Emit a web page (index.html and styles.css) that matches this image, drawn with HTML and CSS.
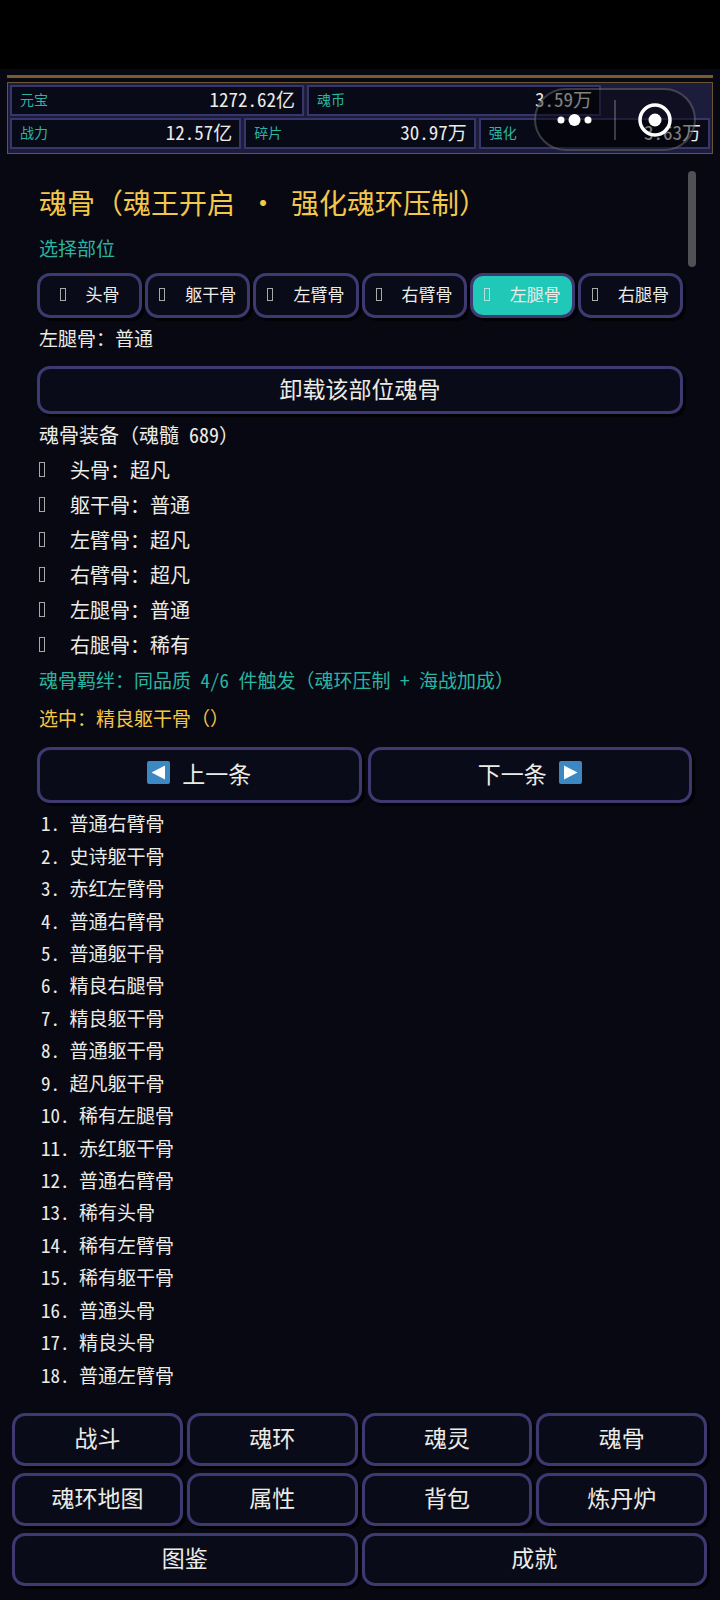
FILE: index.html
```html
<!DOCTYPE html>
<html lang="zh-CN">
<head>
  <meta charset="UTF-8" />
  <meta name="viewport" content="width=device-width, initial-scale=1.0" />
  <title>魂骨</title>
  <link rel="stylesheet" href="styles.css">
</head>
<body>
  <div class="status-bar"></div>

  <header class="hud">
    <div class="hud-box">
      <div class="hud-row hud-row-top">
        <div class="stat"><span class="stat-label">元宝</span><span class="stat-value">1272.62亿</span></div>
        <div class="stat"><span class="stat-label">魂币</span><span class="stat-value">3.59万</span></div>
      </div>
      <div class="hud-row">
        <div class="stat"><span class="stat-label">战力</span><span class="stat-value">12.57亿</span></div>
        <div class="stat"><span class="stat-label">碎片</span><span class="stat-value">30.97万</span></div>
        <div class="stat"><span class="stat-label">强化</span><span class="stat-value">3.63万</span></div>
      </div>
    </div>

    <!-- Mini program capsule -->
    <div class="capsule">
      <button class="capsule-btn" aria-label="更多">
        <svg width="36" height="16" viewBox="0 0 36 16" fill="#fff">
          <circle cx="4" cy="8" r="3.5" />
          <circle cx="17.5" cy="8" r="6" />
          <circle cx="31" cy="8" r="3.5" />
        </svg>
      </button>
      <button class="capsule-btn" aria-label="关闭">
        <svg width="34" height="34" viewBox="0 0 34 34">
          <circle cx="17" cy="17" r="15" fill="none" stroke="#fff" stroke-width="3.500" />
          <circle cx="17" cy="17" r="6.5" fill="#fff" />
        </svg>
      </button>
    </div>
  </header>

  <main class="panel">
    <div class="scrollbar"></div>

    <h1>魂骨（魂王开启<span class="dot">·</span>强化魂环压制）</h1>
    <p class="label">选择部位</p>

    <div class="tabs">
      <button class="btn tab"><i class="glyph"></i>头骨</button>
      <button class="btn tab"><i class="glyph"></i>躯干骨</button>
      <button class="btn tab"><i class="glyph"></i>左臂骨</button>
      <button class="btn tab"><i class="glyph"></i>右臂骨</button>
      <button class="btn tab active"><i class="glyph"></i>左腿骨</button>
      <button class="btn tab"><i class="glyph"></i>右腿骨</button>
    </div>

    <p class="current">左腿骨：普通</p>
    <button class="btn unequip">卸载该部位魂骨</button>

    <h2>魂骨装备（魂髓<span class="half"> 689</span>）</h2>
    <ul class="equipped">
      <li><i class="glyph"></i>头骨：超凡</li>
      <li><i class="glyph"></i>躯干骨：普通</li>
      <li><i class="glyph"></i>左臂骨：超凡</li>
      <li><i class="glyph"></i>右臂骨：超凡</li>
      <li><i class="glyph"></i>左腿骨：普通</li>
      <li><i class="glyph"></i>右腿骨：稀有</li>
    </ul>

    <p class="bond">魂骨羁绊：同品质<span class="half"> 4/6 </span>件触发（魂环压制<span class="half"> + </span>海战加成）</p>
    <p class="selected">选中：精良躯干骨（）</p>

    <div class="pager">
      <button class="btn">
        <svg class="arrow" viewBox="0 0 23 23"><rect width="23" height="23" rx="2" fill="#3b88c3" /><path d="M4.500 11.500 18 4.500v14z" fill="#fff" /></svg>
        上一条
      </button>
      <button class="btn">
        下一条
        <svg class="arrow" viewBox="0 0 23 23"><rect width="23" height="23" rx="2" fill="#3b88c3" /><path d="M18.500 11.500 5 4.500v14z" fill="#fff" /></svg>
      </button>
    </div>

    <ul class="bones">
      <li>1. 普通右臂骨</li>
      <li>2. 史诗躯干骨</li>
      <li>3. 赤红左臂骨</li>
      <li>4. 普通右臂骨</li>
      <li>5. 普通躯干骨</li>
      <li>6. 精良右腿骨</li>
      <li>7. 精良躯干骨</li>
      <li>8. 普通躯干骨</li>
      <li>9. 超凡躯干骨</li>
      <li>10. 稀有左腿骨</li>
      <li>11. 赤红躯干骨</li>
      <li>12. 普通右臂骨</li>
      <li>13. 稀有头骨</li>
      <li>14. 稀有左臂骨</li>
      <li>15. 稀有躯干骨</li>
      <li>16. 普通头骨</li>
      <li>17. 精良头骨</li>
      <li>18. 普通左臂骨</li>
    </ul>
  </main>

  <nav class="menu">
    <button class="btn">战斗</button>
    <button class="btn">魂环</button>
    <button class="btn">魂灵</button>
    <button class="btn">魂骨</button>
    <button class="btn">魂环地图</button>
    <button class="btn">属性</button>
    <button class="btn">背包</button>
    <button class="btn">炼丹炉</button>
    <button class="btn wide">图鉴</button>
    <button class="btn wide">成就</button>
  </nav>
</body>
</html>
```

FILE: styles.css
```css
* {
  box-sizing: border-box;
  margin: 0;
  padding: 0;
}

body {
  display: flex;
  flex-direction: column;
  min-height: 100vh;
  font-family: "Noto Sans CJK SC", sans-serif;
  font-size: 19px;
  line-height: 24px;
  background: #080812;
  color: #ecece6;
}

ul {
  list-style: none;
}

/* Half-width digits, so they line up with the Chinese text */
.half,
.stat-value,
.bones {
  font-feature-settings: "hwid";
}

.status-bar {
  height: 69px;
  background: #000;
}

/* Top stats */
.hud {
  position: relative;
  margin: 6px 7px 0;
  padding-top: 4px;
  border-top: 3px solid #7b5a2e;
}

.hud-box {
  display: flex;
  flex-direction: column;
  gap: 2px;
  padding: 2px 2px 4px;
  border: 1px solid #6b5533;
  background: #1c1c3c;
}

.hud-row {
  display: flex;
  gap: 3px;
}

.stat {
  flex: 1;
  display: flex;
  align-items: center;
  justify-content: space-between;
  height: 31px;
  padding: 0 7px 4px;
  border: 2px solid #38356a;
  background: #090a18;
}

.hud-row-top .stat {
  flex: 0 0 42%;
}

.stat-label {
  padding-left: 1px;
  font-size: 14px;
  color: #2ab5a3;
}

.capsule {
  position: absolute;
  top: 10px;
  right: 17px;
  display: flex;
  align-items: center;
  width: 162px;
  height: 63px;
  border: 2px solid rgba(255, 255, 255, 0.22);
  border-radius: 32px;
  background: rgba(0, 0, 0, 0.45);
}

.capsule-btn {
  flex: 1;
  display: flex;
  align-items: center;
  justify-content: center;
  height: 40px;
  border: none;
  background: none;
}

.capsule-btn + .capsule-btn {
  border-left: 2px solid rgba(255, 255, 255, 0.22);
}

/* Buttons */
.btn {
  display: flex;
  align-items: center;
  justify-content: center;
  padding-bottom: 5px;
  font: inherit;
  font-size: 23px;
  color: inherit;
  white-space: nowrap;
  background: #0a0b19;
  border: 3px solid #3e3970;
  border-radius: 13px;
  box-shadow: 3px 3px 1px #020206;
  cursor: pointer;
}

/* Main panel */
.panel {
  flex: 1;
  position: relative;
  display: flex;
  flex-direction: column;
  padding: 30px 28px 22px 37px;
}

.scrollbar {
  position: absolute;
  top: 17px;
  right: 24px;
  width: 8px;
  height: 96px;
  border-radius: 4px;
  background: #505055;
}

h1,
h2,
.label,
.current,
.equipped,
.bond,
.selected {
  padding-left: 2px;
}

h1 {
  font-size: 28px;
  font-weight: 400;
  line-height: 36px;
  color: #f3c74a;
}

.dot {
  display: inline-block;
  width: 2em;
  text-align: center;
}

.label {
  margin-top: 16px;
  color: #2ab5a3;
}

.tabs {
  display: flex;
  gap: 3px;
  margin: 13px 9px 0 0;
}

.tab {
  flex: 1;
  height: 45px;
  padding-bottom: 3px;
  font-size: 17px;
}

.tab.active {
  background: #20c9b7;
}

.glyph {
  width: 6px;
  height: 13px;
  margin-right: 20px;
  border: 1px solid currentColor;
  opacity: 0.7;
}

.current {
  margin-top: 8px;
}

.unequip {
  height: 48px;
  margin: 16px 9px 3px 0;
}

h2 {
  font-size: 20px;
  font-weight: 400;
  line-height: 35px;
}

.equipped li {
  display: flex;
  align-items: center;
  font-size: 20px;
  line-height: 35px;
}

.equipped .glyph {
  height: 15px;
  margin-right: 25px;
}

.bond {
  line-height: 35px;
  color: #2ab5a3;
}

.selected {
  line-height: 41px;
  color: #f3c74a;
}

.pager {
  display: flex;
  gap: 6px;
  margin: 9px 0 4px;
}

.pager .btn {
  flex: 1;
  height: 56px;
  gap: 12px;
}

.arrow {
  width: 23px;
  height: 23px;
}

.bones {
  flex: 1;
  display: flex;
  flex-direction: column;
  padding-left: 4px;
}

.bones li {
  flex: 1;
  display: flex;
  align-items: center;
}

/* Bottom menu */
.menu {
  display: grid;
  grid-template-columns: repeat(4, 1fr);
  gap: 7px 4px;
  padding: 0 13px 14px 12px;
}

.menu .btn {
  height: 53px;
}

.menu .wide {
  grid-column: span 2;
}
```
